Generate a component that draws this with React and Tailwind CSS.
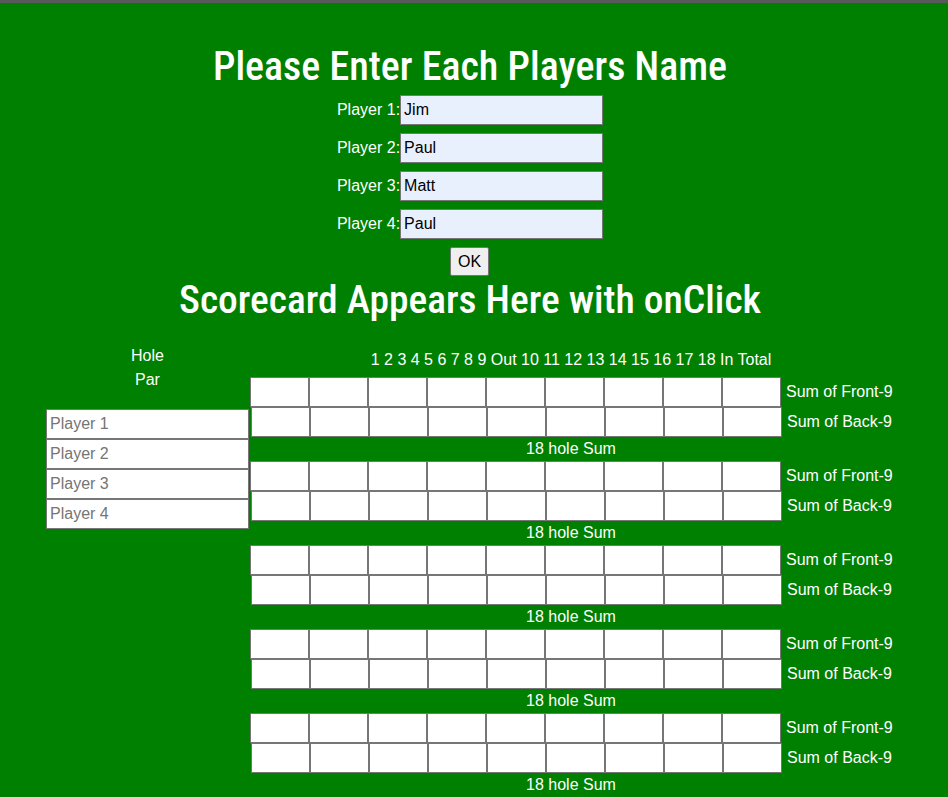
import React from "react";

const heading = { fontFamily: '"Roboto Condensed", "Liberation Sans Narrow", Roboto, "Liberation Sans", Arial, sans-serif', fontStretch: "condensed" };

function Cell() {
  return <div className="w-[59px] h-[30px] border border-[#767676] bg-white shrink-0" />;
}

function Group() {
  const cells = Array.from({ length: 9 });
  return (
    <div>
      <div className="flex items-center h-[30px]">
        {cells.map((_, i) => <Cell key={i} />)}
        <span className="ml-[5px] text-white text-[16px] leading-[18px] whitespace-nowrap">Sum of Front-9</span>
      </div>
      <div className="flex items-center h-[30px] ml-px">
        {cells.map((_, i) => <Cell key={i} />)}
        <span className="ml-[5px] text-white text-[16px] leading-[18px] whitespace-nowrap">Sum of Back-9</span>
      </div>
      <div className="h-6 leading-6 text-center text-white text-[16px]">18 hole Sum</div>
    </div>
  );
}

export default function App() {
  const names = ["Jim", "Paul", "Matt", "Paul"];
  return (
    <div className="min-h-[797px] bg-[#008000] border-t-[3px] border-[#595959] overflow-hidden" style={{ fontFamily: '"Liberation Sans", Arial, sans-serif' }}>
      <div className="w-[940px] flex flex-col items-center">
        <h1 className="mt-[42px] text-[40px] leading-[43px] text-white font-medium" style={heading}>Please Enter Each Players Name</h1>
        <div className="mt-[7px] flex flex-col items-center gap-[8px]">
          {names.map((n, i) => (
            <div key={i} className="flex items-center">
              <span className="text-white text-[16px] leading-[18px]">Player {i + 1}:</span>
              <div className="w-[203px] h-[30px] border border-[#767676] bg-[#e8f0fe] flex items-center pl-[3px] text-black text-[16px]">{n}</div>
            </div>
          ))}
          <button className="w-[39px] h-[29px] mr-px border border-[#767676] rounded-[2px] bg-[#efefef] text-black text-[16px] leading-[18px]">OK</button>
        </div>
        <h2 className="mt-[1px] text-[39.5px] leading-[45px] text-white font-medium" style={heading}>Scorecard Appears Here with onClick</h2>
      </div>
      <div className="mt-[22px] flex pl-[46px]">
        <div className="w-[204px] shrink-0">
          <div className="w-[203px] h-6 leading-6 text-center text-white text-[16px]">Hole</div>
          <div className="w-[203px] h-6 leading-6 text-center text-white text-[16px]">Par</div>
          <div className="mt-[17px] flex flex-col">
            {[1, 2, 3, 4].map((p) => (
              <div key={p} className="w-[203px] h-[30px] border border-[#767676] bg-white flex items-center pl-[3px] text-[#757575] text-[16px]">Player {p}</div>
            ))}
          </div>
        </div>
        <div className="w-[642px] shrink-0">
          <div className="h-[33px] pt-[7px] leading-[18px] text-center text-white text-[16px] whitespace-nowrap">1 2 3 4 5 6 7 8 9 Out 10 11 12 13 14 15 16 17 18 In Total</div>
          {[0, 1, 2, 3, 4].map((g) => <Group key={g} />)}
        </div>
      </div>
    </div>
  );
}
